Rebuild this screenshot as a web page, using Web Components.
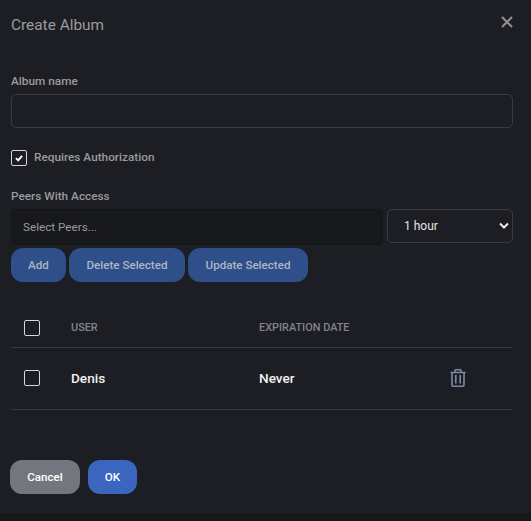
<!DOCTYPE html>
<html><head><meta charset="utf-8">
<style>
html,body{margin:0;padding:0;background:#17181c;}
body{font-family:Roboto,"Liberation Sans",sans-serif;width:531px;height:521px;overflow:hidden;}
</style></head><body>
<album-dialog></album-dialog>

<template id="t-check"><style>
:host{display:inline-flex;width:16px;height:16px;box-sizing:border-box;border:1px solid #d5d5e6;border-radius:2px;align-items:center;justify-content:center;flex:none}
svg{display:none;width:8px;height:8px}
:host([checked]) svg{display:block}
</style><svg viewBox="0 0 10 10"><path d="M1.2 5.2 4 8 8.8 2.4" fill="none" stroke="#fff" stroke-width="2.4"/></svg></template>

<template id="t-btn"><style>
:host{display:inline-flex;align-items:center;justify-content:center;box-sizing:border-box;height:34px;padding-top:1px;border-radius:12px;font:500 11.6px/1 Roboto,sans-serif;color:#fff;background:#3a66c0;flex:none}
:host([dim]){background:#2f4f8a;color:#aeb5c4}
:host([gray]){background:#73777d;color:#fff}
</style><slot></slot></template>

<template id="t-dialog"><style>
:host{display:block;width:531px;height:513px;background:#1d1e23;box-sizing:border-box;padding:0 18px 0 11px;color:#fff}
header{display:flex;justify-content:space-between;align-items:flex-start;height:74px;padding-top:16px;box-sizing:border-box}
h1{margin:0;font:400 15.4px/19px Roboto,sans-serif;color:#9a9b9f}
.x{width:12px;height:12px;margin:0;display:block}
label{display:block;font:500 11.8px/14px Roboto,sans-serif;color:#9a9b9f}
.name{height:34px;box-sizing:border-box;border:1px solid #3a3b40;border-radius:5px;margin-top:6px}
.auth{display:flex;align-items:center;gap:7px;margin-top:22px;height:16px}
.auth label{margin-top:-2px}
.peers-l{margin-top:23px}
.row{display:flex;gap:4px;margin-top:6px;align-items:flex-start}
.peers{width:372px;height:36px;box-sizing:border-box;background:#17181c;border:1px solid #141519;border-radius:4px;padding-left:11px;display:flex;align-items:center;font:400 11.7px Roboto,sans-serif;color:#9a9b9f}
.sel{width:126px;height:34px;box-sizing:border-box;border:1px solid #3a3b40;border-radius:5px;display:flex;align-items:center;justify-content:space-between;padding:0 3px 0 16px;font:400 12px Roboto,sans-serif;color:#e4e4e6}
.sel svg{width:10px;height:8px}
.btns{display:flex;gap:3px;margin-top:3px}
.table{margin-top:24px}
.tr{display:grid;grid-template-columns:60px 188px 1fr 63px;align-items:center;border-bottom:1px solid #37383d}
.tr.h{height:39px;padding-top:2px;font:500 10.9px Roboto,sans-serif;color:#83838f}
.tr.h span{margin-top:-1px}
.tr.b{height:59px;padding-bottom:2px;font:500 13.6px Roboto,sans-serif;color:#f2f2f2}
.tr.b span{margin-top:1px}
.tr>:first-child{margin-left:13px}
.trash{width:16px;height:18px;display:block}
.foot{display:flex;gap:8px;margin:50px 0 0 -1px}
</style>
<header><h1>Create Album</h1><svg class="x" viewBox="0 0 12 12"><path d="M1 1 11 11M11 1 1 11" stroke="#8f8f92" stroke-width="2.2" fill="none"/></svg></header>
<label>Album name</label>
<div class="name"></div>
<div class="auth"><x-check checked></x-check><label>Requires Authorization</label></div>
<label class="peers-l">Peers With Access</label>
<div class="row"><div class="peers">Select Peers...</div><div class="sel"><span>1 hour</span><svg viewBox="0 0 10 8"><path d="M1 1.5 5 5.5 9 1.5" fill="none" stroke="#eee" stroke-width="2"/></svg></div></div>
<div class="btns"><x-btn dim style="width:55px">Add</x-btn><x-btn dim style="width:116px">Delete Selected</x-btn><x-btn dim style="width:120px">Update Selected</x-btn></div>
<div class="table">
<div class="tr h"><x-check></x-check><span>USER</span><span>EXPIRATION DATE</span><span></span></div>
<div class="tr b"><x-check></x-check><span>Denis</span><span>Never</span>
<svg class="trash" viewBox="0 0 16 18"><path d="M.5 3.5h15M5 3.5V1.6Q5 .8 5.8.8h4.4q.8 0 .8.8v1.9M2 3.5v12.6q0 1.1 1.1 1.1h9.8q1.1 0 1.1-1.1V3.5M5.8 6v8.6M10.2 6v8.6" fill="none" stroke="#7d8aa5" stroke-width="1.6"/></svg></div>
</div>
<div class="foot"><x-btn gray style="width:70px">Cancel</x-btn><x-btn style="width:49px">OK</x-btn></div>
</template>

<script>
const def=(n,t)=>customElements.define(n,class extends HTMLElement{constructor(){super();this.attachShadow({mode:'open'}).appendChild(document.getElementById(t).content.cloneNode(true));}});
def('x-check','t-check');def('x-btn','t-btn');def('album-dialog','t-dialog');
</script>
</body></html>
